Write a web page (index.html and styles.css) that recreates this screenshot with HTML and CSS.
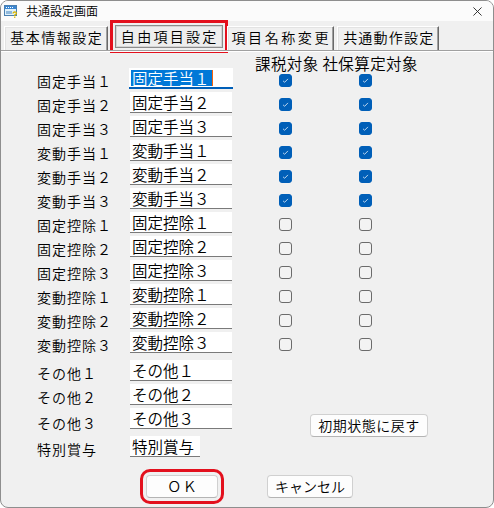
FILE: index.html
```html
<!DOCTYPE html>
<html lang="ja">
<head>
<meta charset="utf-8">
<title>共通設定画面</title>
<link rel="stylesheet" href="styles.css">
</head>
<body>
<div class="window">
  <div class="titlebar">
    <svg class="app-icon" viewBox="0 0 14 14" width="14" height="14">
      <rect x="0.5" y="1.5" width="12" height="10" fill="#dff1fb" stroke="#4a7fb0"/>
      <rect x="1" y="2" width="11" height="3" fill="#3b86d1"/>
      <rect x="2" y="3" width="1" height="1" fill="#fff"/>
      <rect x="4" y="3" width="1" height="1" fill="#fff"/>
      <rect x="6" y="3" width="1" height="1" fill="#fff"/>
      <rect x="8" y="3" width="1" height="1" fill="#fff"/>
      <rect x="2" y="7" width="6" height="3" fill="#8fb8dc"/>
      <path d="M9 9.5 Q9 8 10.8 8 Q12.6 8 12.3 9.6 Q12 10.6 10.6 11 L10.6 12" fill="none" stroke="#d8b400" stroke-width="1.3"/>
      <rect x="10" y="12.6" width="1.4" height="1.2" fill="#d8b400"/>
    </svg>
    <span class="title">共通設定画面</span>
    <svg class="close" viewBox="0 0 10 10" width="10" height="10">
      <path d="M0.5 0.5 L9.5 9.5 M9.5 0.5 L0.5 9.5" stroke="#222" stroke-width="1" fill="none"/>
    </svg>
  </div>

  <div class="tabs">
    <div class="tab t1">基本情報設定</div>
    <div class="tab t2 active">自由項目設定</div>
    <div class="tab t3">項目名称変更</div>
    <div class="tab t4">共通動作設定</div>
  </div>

  <div class="panel">
    <div class="row row-head">
      <div class="hdr">課税対象 社保算定対象</div>
    </div>

    <div class="row">
      <div class="lbl">固定手当１</div>
      <div class="field focus"><span class="sel">固定手当１</span><span class="caret"></span></div>
      <span class="cb on"><svg viewBox="0 0 13 13"><path d="M3.6 6.9 L5.5 8.6 L9.4 4.6" /></svg></span>
      <span class="cb on"><svg viewBox="0 0 13 13"><path d="M3.6 6.9 L5.5 8.6 L9.4 4.6" /></svg></span>
    </div>
    <div class="row">
      <div class="lbl">固定手当２</div>
      <div class="field">固定手当２</div>
      <span class="cb on"><svg viewBox="0 0 13 13"><path d="M3.6 6.9 L5.5 8.6 L9.4 4.6" /></svg></span>
      <span class="cb on"><svg viewBox="0 0 13 13"><path d="M3.6 6.9 L5.5 8.6 L9.4 4.6" /></svg></span>
    </div>
    <div class="row">
      <div class="lbl">固定手当３</div>
      <div class="field">固定手当３</div>
      <span class="cb on"><svg viewBox="0 0 13 13"><path d="M3.6 6.9 L5.5 8.6 L9.4 4.6" /></svg></span>
      <span class="cb on"><svg viewBox="0 0 13 13"><path d="M3.6 6.9 L5.5 8.6 L9.4 4.6" /></svg></span>
    </div>
    <div class="row">
      <div class="lbl">変動手当１</div>
      <div class="field">変動手当１</div>
      <span class="cb on"><svg viewBox="0 0 13 13"><path d="M3.6 6.9 L5.5 8.6 L9.4 4.6" /></svg></span>
      <span class="cb on"><svg viewBox="0 0 13 13"><path d="M3.6 6.9 L5.5 8.6 L9.4 4.6" /></svg></span>
    </div>
    <div class="row">
      <div class="lbl">変動手当２</div>
      <div class="field">変動手当２</div>
      <span class="cb on"><svg viewBox="0 0 13 13"><path d="M3.6 6.9 L5.5 8.6 L9.4 4.6" /></svg></span>
      <span class="cb on"><svg viewBox="0 0 13 13"><path d="M3.6 6.9 L5.5 8.6 L9.4 4.6" /></svg></span>
    </div>
    <div class="row">
      <div class="lbl">変動手当３</div>
      <div class="field">変動手当３</div>
      <span class="cb on"><svg viewBox="0 0 13 13"><path d="M3.6 6.9 L5.5 8.6 L9.4 4.6" /></svg></span>
      <span class="cb on"><svg viewBox="0 0 13 13"><path d="M3.6 6.9 L5.5 8.6 L9.4 4.6" /></svg></span>
    </div>
    <div class="row">
      <div class="lbl">固定控除１</div>
      <div class="field">固定控除１</div>
      <span class="cb"></span>
      <span class="cb"></span>
    </div>
    <div class="row">
      <div class="lbl">固定控除２</div>
      <div class="field">固定控除２</div>
      <span class="cb"></span>
      <span class="cb"></span>
    </div>
    <div class="row">
      <div class="lbl">固定控除３</div>
      <div class="field">固定控除３</div>
      <span class="cb"></span>
      <span class="cb"></span>
    </div>
    <div class="row">
      <div class="lbl">変動控除１</div>
      <div class="field">変動控除１</div>
      <span class="cb"></span>
      <span class="cb"></span>
    </div>
    <div class="row">
      <div class="lbl">変動控除２</div>
      <div class="field">変動控除２</div>
      <span class="cb"></span>
      <span class="cb"></span>
    </div>
    <div class="row">
      <div class="lbl">変動控除３</div>
      <div class="field">変動控除３</div>
      <span class="cb"></span>
      <span class="cb"></span>
    </div>

    <div class="row spaced">
      <div class="lbl">その他１</div>
      <div class="field">その他１</div>
    </div>
    <div class="row">
      <div class="lbl">その他２</div>
      <div class="field">その他２</div>
    </div>
    <div class="row">
      <div class="lbl">その他３</div>
      <div class="field">その他３</div>
      <button class="btn reset">初期状態に戻す</button>
    </div>
    <div class="row spaced">
      <div class="lbl">特別賞与</div>
      <div class="field short">特別賞与</div>
    </div>

    <div class="footer">
      <button class="btn ok">ＯＫ</button>
      <button class="btn cancel">キャンセル</button>
    </div>
  </div>
</div>
</body>
</html>
```

FILE: styles.css
```css
html, body {
  margin: 0;
  padding: 0;
  background: #ffffff;
}

body {
  width: 494px;
  height: 508px;
  font-family: "Noto Sans CJK JP", "Noto Sans", sans-serif;
  font-weight: 350;
  color: #000;
}

.window {
  box-sizing: border-box;
  width: 494px;
  height: 508px;
  border: 1px solid #8e8e8e;
  border-radius: 8px;
  background: #f0f0f0;
  overflow: hidden;
  display: flex;
  flex-direction: column;
}

/* title bar */
.titlebar {
  height: 20px;
  display: flex;
  align-items: center;
  padding-left: 3px;
  background: #fbfbfb;
  flex: none;
}

.app-icon {
  width: 14px;
  height: 14px;
  margin-right: 8px;
  flex: none;
}

.title {
  font-size: 12px;
  line-height: 20px;
}

.close {
  margin-left: auto;
  margin-right: 11px;
  width: 9px;
  height: 9px;
  flex: none;
}

/* tabs */
.tabs {
  height: 29px;
  display: flex;
  align-items: flex-end;
  padding-left: 3px;
  flex: none;
}

.tab {
  box-sizing: border-box;
  height: 24px;
  padding-bottom: 3px;
  display: flex;
  align-items: center;
  justify-content: center;
  font-size: 14px;
  letter-spacing: 1.5px;
  text-indent: 1.5px;
  white-space: nowrap;
  background: #f0f0f0;
  border-top: 1px solid #ffffff;
  border-left: 1px solid #ffffff;
  border-right: 1px solid #696969;
  box-shadow: inset -1px 0 #a0a0a0, inset 1px 1px #e3e3e3;
}

.t1 { width: 104px; }
.t2 { width: 108px; margin-left: 7px; letter-spacing: 2.3px; }
.t3 { width: 107px; margin-left: 4px; letter-spacing: 2.6px; }
.t4 { width: 102px; margin-left: 3px; letter-spacing: 1.2px; }

.tab.active {
  height: 23px;
  padding-bottom: 1px;
  margin-bottom: 2px;
  border: 1px solid #8c8c8c;
  box-shadow: inset 0 0 0 1px #d4d4d4;
  background-color: #f8f8f8;
  background-image: radial-gradient(circle, #e2e2e2 0.6px, transparent 0.8px);
  background-size: 2px 2px;
  outline: 3px solid #e3101d;
  outline-offset: 2px;
}

/* panel */
.panel {
  flex: 1;
  border-top: 1px solid #a0a0a0;
  box-shadow: inset 0 1px #ffffff;
  padding-left: 36px;
  display: flex;
  flex-direction: column;
}

.row {
  display: grid;
  grid-template-columns: 93px 102px 80px 1fr;
  height: 24px;
  align-items: center;
  flex: none;
}

.row.spaced {
  margin-top: 4px;
}

.row-head {
  height: 17px;
  align-items: start;
}

.hdr {
  grid-column: 3 / 5;
  padding-left: 23px;
  font-size: 15.5px;
  letter-spacing: 0.4px;
  line-height: 17px;
  padding-top: 4px;
  white-space: nowrap;
}

.lbl {
  font-size: 14px;
  letter-spacing: 1px;
  line-height: 16px;
  white-space: nowrap;
  padding-top: 1px;
}

.field {
  align-self: start;
  box-sizing: border-box;
  width: 102px;
  height: 21px;
  background: #ffffff;
  border-bottom: 1px solid #7a7a7a;
  font-size: 15.5px;
  line-height: 20px;
  padding-left: 2px;
  white-space: nowrap;
}

.field.short {
  width: 70px;
}

.field.focus {
  width: 104px;
  margin-left: -1px;
  padding-left: 2px;
  border-bottom: 2px solid #005fb8;
  display: flex;
  align-items: center;
}

.sel {
  display: inline-block;
  background: #0078d7;
  color: #ffffff;
  height: 16px;
  line-height: 16px;
  padding-left: 1px;
  padding-right: 2px;
}

.caret {
  display: inline-block;
  width: 1px;
  height: 16px;
  background: #f7630c;
}

/* checkboxes */
.cb {
  box-sizing: border-box;
  width: 13px;
  height: 13px;
  margin-left: 47px;
  border: 1px solid #6b6b6b;
  border-radius: 3px;
  background: #f3f3f3;
  display: block;
}

.cb.on {
  background: #005fb8;
  border-color: #005fb8;
}

.cb svg {
  display: block;
  width: 11px;
  height: 11px;
}

.cb svg path {
  fill: none;
  stroke: #dbe8f7;
  stroke-width: 1;
}

/* buttons */
.btn {
  box-sizing: border-box;
  height: 23px;
  padding: 0 0 1px 0;
  border: 1px solid #d0d0d0;
  border-bottom-color: #b4b4b4;
  border-radius: 4px;
  background: #fdfdfd;
  font-family: "Noto Sans CJK JP", "Noto Sans", sans-serif;
  font-weight: 350;
  font-size: 14px;
  line-height: 20px;
  color: #000;
  white-space: nowrap;
}

.reset {
  grid-column: 3 / 5;
  justify-self: start;
  align-self: start;
  width: 118px;
  margin-top: 6px;
  margin-left: 78px;
  letter-spacing: 0.5px;
}

.footer {
  display: flex;
  gap: 49px;
  padding-left: 109px;
  margin-top: 15px;
}

.ok {
  width: 72px;
  letter-spacing: 1.5px;
  text-indent: 1.5px;
  outline: 3px solid #e3101d;
  outline-offset: 3px;
}

.cancel {
  width: 86px;
}
```
